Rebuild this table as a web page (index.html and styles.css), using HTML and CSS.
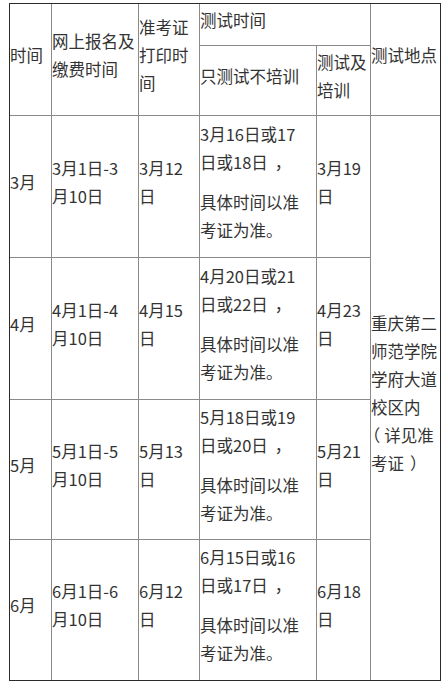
FILE: index.html
```html
<!DOCTYPE html>
<html lang="zh-CN">
<head>
<meta charset="utf-8">
<title>测试安排</title>
<link rel="stylesheet" href="styles.css">
</head>
<body>
<table class="schedule">
  <colgroup>
    <col class="c1"><col class="c2"><col class="c3"><col class="c4"><col class="c5"><col class="c6">
  </colgroup>
  <tr class="ra">
    <td rowspan="2">时间</td>
    <td rowspan="2">网上报名及<br>缴费时间</td>
    <td rowspan="2">准考证<br>打印时<br>间</td>
    <td colspan="2">测试时间</td>
    <td rowspan="2" class="last">测试地点</td>
  </tr>
  <tr class="rb">
    <td>只测试不培训</td>
    <td>测试及<br>培训</td>
  </tr>
  <tr class="r1">
    <td>3月</td>
    <td>3月1日-3<br>月10日</td>
    <td>3月12<br>日</td>
    <td><p>3月16日或17<br>日或18日<span class="comma">，</span></p><p>具体时间以准<br>考证为准。</p></td>
    <td>3月19<br>日</td>
    <td rowspan="4" class="last bottom">重庆第二<br>师范学院<br>学府大道<br>校区内<br><span class="popen">（</span>详见准<br>考证<span class="pclose">）</span></td>
  </tr>
  <tr class="r2">
    <td>4月</td>
    <td>4月1日-4<br>月10日</td>
    <td>4月15<br>日</td>
    <td><p>4月20日或21<br>日或22日<span class="comma">，</span></p><p>具体时间以准<br>考证为准。</p></td>
    <td>4月23<br>日</td>
  </tr>
  <tr class="r3">
    <td>5月</td>
    <td>5月1日-5<br>月10日</td>
    <td>5月13<br>日</td>
    <td><p>5月18日或19<br>日或20日<span class="comma">，</span></p><p>具体时间以准<br>考证为准。</p></td>
    <td>5月21<br>日</td>
  </tr>
  <tr class="r4">
    <td class="bottom">6月</td>
    <td class="bottom">6月1日-6<br>月10日</td>
    <td class="bottom">6月12<br>日</td>
    <td class="bottom"><p>6月15日或16<br>日或17日<span class="comma">，</span></p><p>具体时间以准<br>考证为准。</p></td>
    <td class="bottom">6月18<br>日</td>
  </tr>
</table>
</body>
</html>
```
FILE: styles.css
```css
html, body {
  margin: 0;
  padding: 0;
  background: #ffffff;
}

body {
  font-family: "Noto Sans CJK SC", "Noto Sans", sans-serif;
  font-size: 16.5px;
  color: #333333;
}

.schedule {
  margin: 3px 0 0 9px;
  box-sizing: border-box;
  width: 432px;
  table-layout: fixed;
  border-collapse: separate;
  border-spacing: 0;
  border: 1px solid #2b2b2b;
}

.c1 { width: 42px; }
.c2 { width: 87px; }
.c3 { width: 61px; }
.c4 { width: 117px; }
.c5 { width: 54px; }
.c6 { width: 69px; }

.schedule td {
  box-sizing: border-box;
  padding: 0 0 10px 0;
  border-right: 1px solid #8a8a8a;
  border-bottom: 1px solid #8a8a8a;
  vertical-align: middle;
  text-align: left;
  line-height: 28px;
  white-space: nowrap;
}

.schedule td.last { border-right: none; }
.schedule td.bottom { border-bottom: none; }

.schedule p { margin: 0; }
.schedule p + p { margin-top: 12px; }

.comma {
  font-feature-settings: "halt" 1;
  padding-left: 7px;
}

.popen {
  font-feature-settings: "halt" 1;
  padding-left: 1px;
  padding-right: 4px;
}

.pclose {
  font-feature-settings: "halt" 1;
  padding-left: 6px;
}

.ra { height: 42px; }
.rb { height: 70px; }
.r1 { height: 142px; }
.r2 { height: 142px; }
.r3 { height: 140px; }
.r4 { height: 140px; }
```
